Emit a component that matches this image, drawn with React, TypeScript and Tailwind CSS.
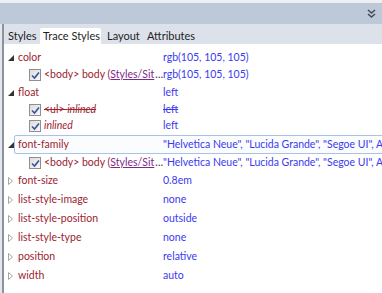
import React from 'react';

type Row = {
  kind: 'prop' | 'rule';
  name?: string;
  open?: boolean;
  value: string;
  strike?: boolean;
  label?: React.ReactNode;
  selected?: boolean;
};

const Expanded = () => (
  <svg width="6" height="6" viewBox="0 0 6 6" className="shrink-0">
    <path d="M6 0 L6 6 L0 6 Z" fill="#333" />
  </svg>
);

const Collapsed = () => (
  <svg width="5" height="8" viewBox="0 0 5 8" className="shrink-0">
    <path d="M0.5 0.5 L4.5 4 L0.5 7.5 Z" fill="none" stroke="#a6a6a6" strokeWidth="1" />
  </svg>
);

const Check = () => (
  <div className="w-[12px] h-[12px] border border-[#8e8f8f] bg-gradient-to-br from-[#dcdcdc] to-[#f8f8f8] flex items-center justify-center shrink-0">
    <svg width="9" height="9" viewBox="0 0 9 9">
      <path d="M1 4.5 L3.5 7 L8 1.5" fill="none" stroke="#3d4f9c" strokeWidth="1.6" />
    </svg>
  </div>
);

const BodyLink = () => (
  <span className="whitespace-nowrap">
    &lt;body&gt; body (<span className="text-[#7d2a8a] underline">Styles/Sit</span>
    <span className="text-[#333] pl-[1px]">…</span>
  </span>
);

const rows: Row[] = [
  { kind: 'prop', name: 'color', open: true, value: 'rgb(105, 105, 105)' },
  { kind: 'rule', label: <BodyLink />, value: 'rgb(105, 105, 105)' },
  { kind: 'prop', name: 'float', open: true, value: 'left' },
  {
    kind: 'rule',
    label: (
      <span className="line-through whitespace-nowrap">
        &lt;ul&gt; <span className="italic">inlined</span>
      </span>
    ),
    value: 'left',
    strike: true,
  },
  { kind: 'rule', label: <span className="italic">inlined</span>, value: 'left' },
  {
    kind: 'prop',
    name: 'font-family',
    open: true,
    selected: true,
    value: '"Helvetica Neue", "Lucida Grande", "Segoe UI", Arial',
  },
  { kind: 'rule', label: <BodyLink />, value: '"Helvetica Neue", "Lucida Grande", "Segoe UI", Arial' },
  { kind: 'prop', name: 'font-size', value: '0.8em' },
  { kind: 'prop', name: 'list-style-image', value: 'none' },
  { kind: 'prop', name: 'list-style-position', value: 'outside' },
  { kind: 'prop', name: 'list-style-type', value: 'none' },
  { kind: 'prop', name: 'position', value: 'relative' },
  { kind: 'prop', name: 'width', value: 'auto' },
];

export default function App() {
  return (
    <div
      className="w-[382px] h-[293px] overflow-hidden bg-white flex flex-col text-[10.5px]"
      style={{ fontFamily: 'Lato, "Noto Sans", sans-serif' }}
    >
      <div className="h-[3px] bg-[#eeeff1] shrink-0" />
      <div className="h-[21px] bg-[#bdc9d9] flex items-center justify-end pr-[6px] shrink-0">
        <svg width="9" height="9" viewBox="0 0 9 9">
          <path d="M1 1 L4.5 4 L8 1 M1 5 L4.5 8 L8 5" fill="none" stroke="#444a55" strokeWidth="1.5" />
        </svg>
      </div>
      <div className="flex flex-1 min-h-0">
        <div className="w-[2px] bg-[#e3e7ed]" />
        <div className="w-[2px] bg-[#8d939d]" />
        <div className="flex-1 flex flex-col min-w-0">
          <div className="h-[20px] bg-[#dde2ea] flex items-end text-[#1e1e1e] shrink-0 whitespace-nowrap text-[11px]">
            <div className="w-[36px] h-[16px] flex items-center pl-[4px]">Styles</div>
            <div className="w-[61px] h-[16px] flex items-center pl-[3px] bg-white rounded-t-[2px]">Trace Styles</div>
            <div className="w-[41px] h-[16px] flex items-center pl-[6px]">Layout</div>
            <div className="h-[16px] flex items-center pl-[5px]">Attributes</div>
          </div>
          <div className="pt-[4px] flex flex-col whitespace-nowrap">
            {rows.map((r, i) =>
              r.kind === 'prop' ? (
                <div
                  key={i}
                  className={`flex items-center h-[19px] shrink-0 ${r.selected ? 'my-[1px]' : ''}`}
                >
                  <div className="w-[10px] flex items-center justify-center pl-[3px] shrink-0">
                    {r.open ? <Expanded /> : <Collapsed />}
                  </div>
                  <div
                    className={`flex items-center flex-1 h-full min-w-0 border ${
                      r.selected
                        ? 'border-[#a8c3e8] rounded-l-[2px] bg-[#fbfcfe] -mr-[4px]'
                        : 'border-transparent'
                    }`}
                  >
                    <div className="w-[148px] pl-[3px] text-[#9b2430] shrink-0">{r.name}</div>
                    <div className="text-[#3a3af0]">{r.value}</div>
                  </div>
                </div>
              ) : (
                <div key={i} className="flex items-center h-[16px] shrink-0">
                  <div className="w-[25px] shrink-0" />
                  <Check />
                  <div className="w-[122px] pl-[3px] text-[#9b2430] shrink-0 overflow-hidden">{r.label}</div>
                  <div className={`text-[#3a3af0] ${r.strike ? 'line-through' : ''}`}>{r.value}</div>
                </div>
              )
            )}
          </div>
        </div>
      </div>
    </div>
  );
}
